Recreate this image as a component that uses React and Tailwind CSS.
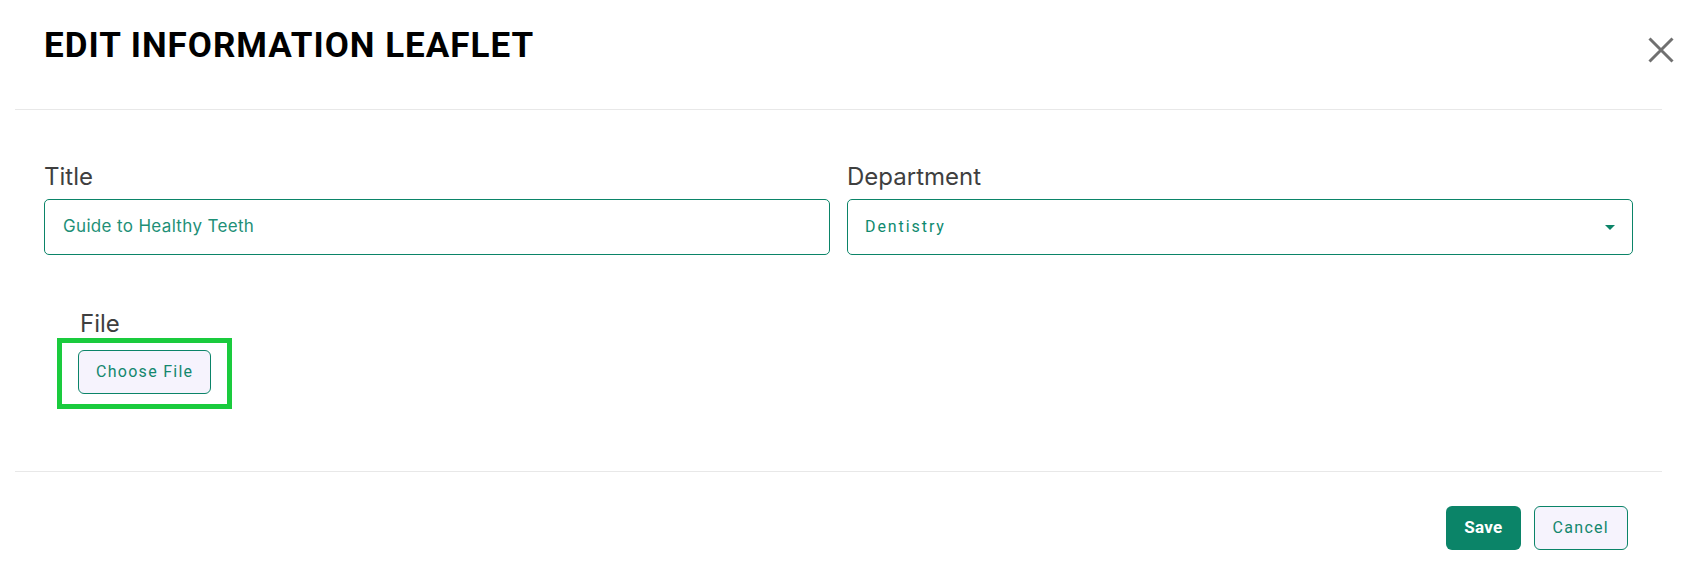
export default function App() {
  return (
    <div className="relative w-[1683px] h-[576px] bg-white overflow-hidden font-[Roboto,sans-serif]">
      <button className="absolute left-[1648px] top-[37px] w-[26px] h-[26px] text-[#707070]" aria-label="Close">
        <svg viewBox="0 0 26 26" className="w-full h-full" fill="none" stroke="currentColor" strokeWidth="3">
          <path d="M1.5 1.5 L24.5 24.5 M24.5 1.5 L1.5 24.5" />
        </svg>
      </button>

      <div className="ml-[15px] w-[1647px]">
        <div className="h-[110px] pt-[28px] pl-[29px] border-b border-[#e8e8e8]">
          <h1 className="text-[35px] leading-none font-bold tracking-[1px] text-black whitespace-nowrap">
            EDIT INFORMATION LEAFLET
          </h1>
        </div>

        <div className="px-[29px] pt-[55px] h-[362px] border-b border-[#e8e8e8]">
          <div className="grid grid-cols-2 gap-[17px]">
            <div>
              <label className="block text-[24px] leading-none text-[#3f3f3f] font-[Inter,sans-serif]">Title</label>
              <div className="mt-[10px] h-[56px] rounded-[5px] border border-[#0b8468] flex items-center pl-[18px]">
                <span className="text-[17px] tracking-[0.02em] text-[#1e9077] font-[Inter,sans-serif]">Guide to Healthy Teeth</span>
              </div>
            </div>
            <div>
              <label className="block text-[24px] leading-none text-[#3f3f3f] font-[Inter,sans-serif]">Department</label>
              <div className="mt-[10px] h-[56px] rounded-[5px] border border-[#0b8468] flex items-center pl-[17px] pr-[17px]">
                <span className="flex-1 text-[16px] tracking-[0.12em] text-[#0e8a6e]">Dentistry</span>
                <svg width="10" height="5" viewBox="0 0 10 5" className="text-[#0b8468]">
                  <path d="M0 0 L10 0 L5 5 Z" fill="currentColor" />
                </svg>
              </div>
            </div>
          </div>

          <div className="mt-[57px] ml-[13px]">
            <label className="block pl-[23px] text-[24px] leading-none text-[#3f3f3f] font-[Inter,sans-serif]">File</label>
            <div className="mt-[2px] w-fit border-[5px] border-[#1acb3d] px-[16px] pt-[7px] pb-[10px]">
              <button className="h-[44px] px-[17px] rounded-[6px] border border-[#0b8468] bg-[#f6f3fd] text-[16px] tracking-[0.08em] text-[#13876d]">
                Choose File
              </button>
            </div>
          </div>
        </div>

        <div className="flex justify-end gap-[13px] pt-[34px] pr-[34px]">
          <button className="h-[44px] px-[18px] rounded-[6px] bg-[#0b8468] text-white text-[17px] font-bold tracking-[0.02em]">
            Save
          </button>
          <button className="h-[44px] px-[18px] rounded-[6px] border border-[#0b8468] bg-[#f6f3fd] text-[16px] tracking-[0.08em] text-[#13876d]">
            Cancel
          </button>
        </div>
      </div>
    </div>
  );
}
